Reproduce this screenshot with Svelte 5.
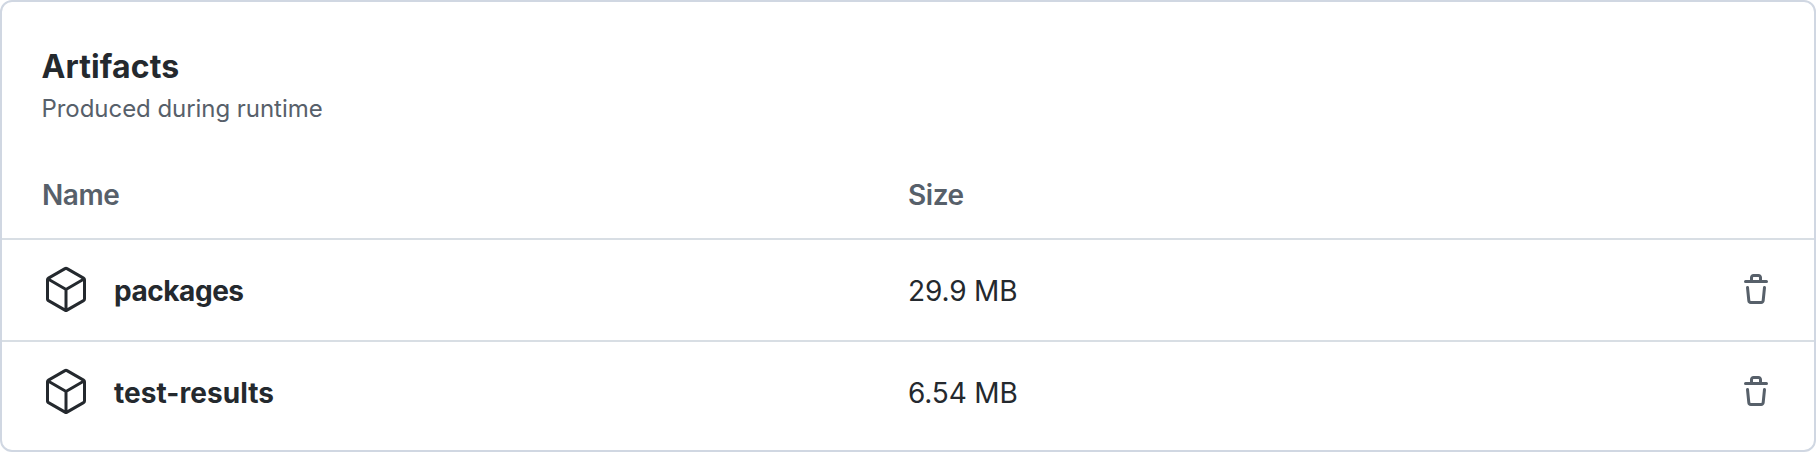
<script>
  const artifacts = [
    { name: 'packages', size: '29.9 MB', tracking: -0.45 },
    { name: 'test-results', size: '6.54 MB', tracking: 0.05 }
  ];
</script>

<section class="card">
  <header>
    <h2>Artifacts</h2>
    <p>Produced during runtime</p>
  </header>
  <div class="row head">
    <div>Name</div>
    <div>Size</div>
  </div>
  {#each artifacts as artifact}
    <div class="row item">
      <div class="name">
        <svg class="package" viewBox="0 0 24 24" aria-hidden="true">
          <path fill-rule="evenodd" d="M12.876.64a1.75 1.75 0 0 0-1.75 0l-8.25 4.762a1.75 1.75 0 0 0-.875 1.515v9.525c0 .625.334 1.203.875 1.515l8.25 4.763a1.75 1.75 0 0 0 1.75 0l8.25-4.762a1.75 1.75 0 0 0 .875-1.516V6.917a1.75 1.75 0 0 0-.875-1.515L12.876.639zm-1 1.298a.25.25 0 0 1 .25 0l7.625 4.402-7.75 4.474-7.75-4.474 7.625-4.402zM3.501 7.64v8.803c0 .09.048.172.125.216l7.625 4.402v-8.947L3.501 7.64zm9.25 13.421 7.625-4.402a.25.25 0 0 0 .125-.216V7.639l-7.75 4.474v8.947z" />
        </svg>
        <strong style="letter-spacing: {artifact.tracking}px">{artifact.name}</strong>
      </div>
      <div class="size">{artifact.size}</div>
      <button aria-label="Delete">
        <svg class="trash" viewBox="0 0 16 16" aria-hidden="true">
          <path fill-rule="evenodd" d="M6.5 1.75a.25.25 0 01.25-.25h2.5a.25.25 0 01.25.25V3h-3V1.75zm4.5 0V3h2.25a.75.75 0 010 1.5H2.75a.75.75 0 010-1.5H5V1.75C5 .784 5.784 0 6.75 0h2.5C10.216 0 11 .784 11 1.75zM4.496 6.675a.75.75 0 10-1.492.15l.66 6.6A1.75 1.75 0 005.405 15h5.19c.9 0 1.652-.681 1.741-1.576l.66-6.6a.75.75 0 00-1.492-.149l-.66 6.6a.25.25 0 01-.249.225h-5.19a.25.25 0 01-.249-.225l-.66-6.6z" />
        </svg>
      </button>
    </div>
  {/each}
</section>

<style>
  :global(body) {
    margin: 0;
    background: #fff;
  }
  .card {
    box-sizing: border-box;
    height: 452px;
    border: 2px solid #d0d7e2;
    border-radius: 12px;
    background: #fff;
    color: #24292e;
    font-family: Inter, sans-serif;
    font-size: 28px;
    line-height: 42px;
    overflow: hidden;
  }
  header {
    padding: 41px 40px 0 39.5px;
    height: 116px;
    box-sizing: border-box;
  }
  h2 {
    margin: 0;
    font-size: 32px;
    font-weight: 700;
    line-height: 48px;
    letter-spacing: 0.1px;
  }
  p {
    margin: 0;
    color: #57606a;
    font-size: 24px;
    font-weight: 400;
    line-height: 36px;
    letter-spacing: -0.05px;
  }
  .row {
    display: grid;
    grid-template-columns: 866px 1fr auto;
    box-sizing: border-box;
    padding: 0 40px;
  }
  .head {
    height: 120px;
    padding-top: 56px;
    color: #57606a;
    font-weight: 600;
    letter-spacing: -0.45px;
  }
  .item {
    height: 102px;
    border-top: 2px solid #d8dee4;
    align-items: center;
  }
  .name {
    display: flex;
    align-items: center;
    gap: 24px;
  }
  strong {
    font-weight: 700;
    padding-top: 2px;
  }
  .size {
    padding-top: 2px;
    font-weight: 400;
    letter-spacing: -0.15px;
  }
  svg {
    display: block;
    flex: none;
  }
  .package {
    width: 48px;
    height: 48px;
    fill: #24292e;
  }
  .trash {
    width: 32px;
    height: 32px;
    fill: #57606a;
  }
  button {
    border: 0;
    padding: 0;
    background: none;
    margin-right: 2px;
  }
</style>
